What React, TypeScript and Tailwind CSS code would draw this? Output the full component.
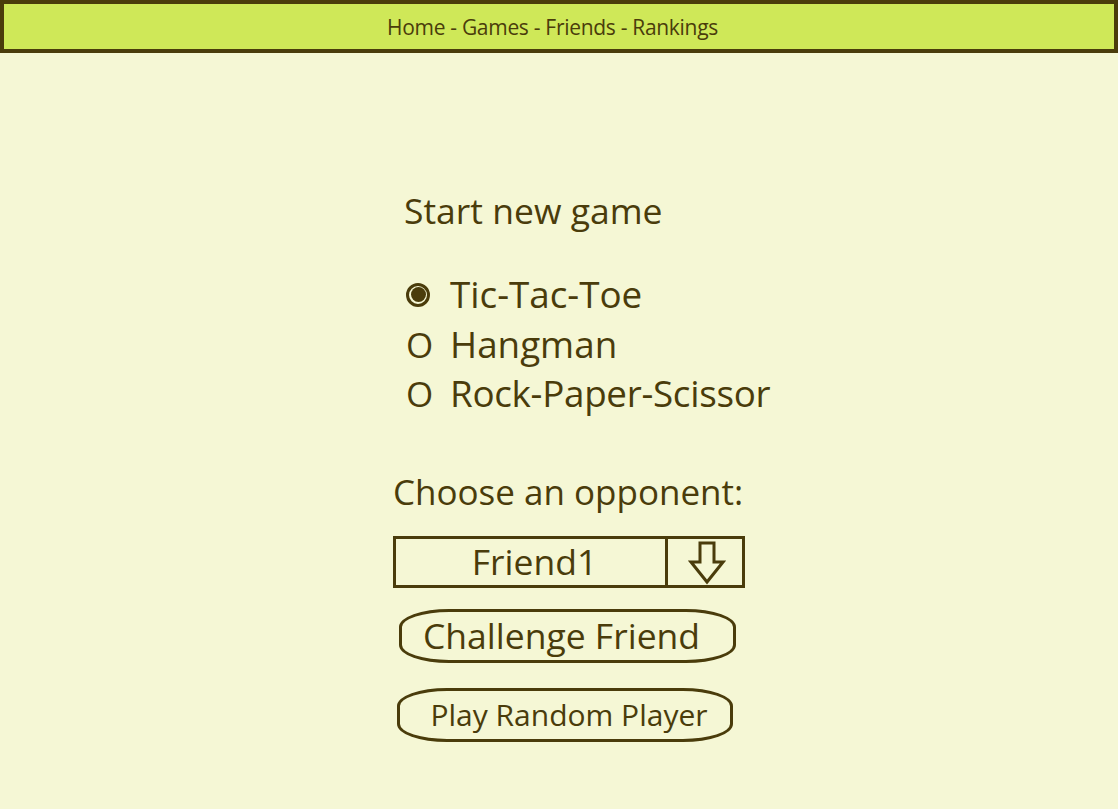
import React from "react";

export default function App() {
  const font = { fontFamily: '"Open Sans", "Noto Sans", sans-serif' };
  return (
    <div className="min-h-[809px] w-full bg-[#f5f7d5] text-[#4a3c0b]" style={font}>
      <nav className="h-[53px] border-4 border-[#4a3c0b] bg-[#cfe858] flex items-center justify-center pr-[13px]">
        <span className="text-[21px] leading-none tracking-[-0.3px] mt-[2px]">Home - Games - Friends - Rankings</span>
      </nav>
      <div className="pl-[393px] pt-[137px]">
        <div className="pl-[11px] text-[35.5px] leading-[40px]">Start new game</div>
        <div className="mt-[40px] pl-[13px] flex flex-col text-[36.8px] leading-[49.5px]">
          <div className="flex items-center">
            <span className="w-[44px] flex items-center">
              <span className="w-[24px] h-[24px] rounded-full border-[3px] border-[#4a3c0b] bg-[#f5f7d5] flex items-center justify-center">
                <span className="w-[15px] h-[15px] rounded-full bg-[#4a3c0b] block" />
              </span>
            </span>
            <span>Tic-Tac-Toe</span>
          </div>
          <div className="flex items-center">
            <span className="w-[44px] text-[35px]">O</span>
            <span>Hangman</span>
          </div>
          <div className="flex items-center">
            <span className="w-[44px] text-[35px]">O</span>
            <span className="tracking-[-0.3px]">Rock-Paper-Scissor</span>
          </div>
        </div>
        <div className="mt-[51px] text-[35px] leading-[44px]">Choose an opponent:</div>
        <div className="mt-[22px] w-[352px] h-[52px] border-[3px] border-[#4a3c0b] flex">
          <div className="flex-1 flex items-center justify-center text-[35.5px] pl-[8px]">Friend1</div>
          <div className="w-[77px] border-l-[3px] border-[#4a3c0b] flex items-center justify-center">
            <svg width="38" height="44" viewBox="0 0 38 44" className="mt-[2px] ml-[3px]">
              <path d="M12 2 H26 V21 H35 L19 41 L3 21 H12 Z" fill="none" stroke="#4a3c0b" strokeWidth="3" strokeLinejoin="miter" />
            </svg>
          </div>
        </div>
        <button className="mt-[21px] ml-[6px] w-[337px] h-[54px] border-[3px] border-[#4a3c0b] rounded-[50px_/_18px] text-[35.5px] leading-none flex items-center justify-center pr-[12px]">
          Challenge Friend
        </button>
        <button className="mt-[25px] ml-[4px] w-[336px] h-[54px] border-[3px] border-[#4a3c0b] rounded-[50px_/_18px] text-[30px] leading-none flex items-center justify-center pl-[8px]">
          Play Random Player
        </button>
      </div>
    </div>
  );
}
